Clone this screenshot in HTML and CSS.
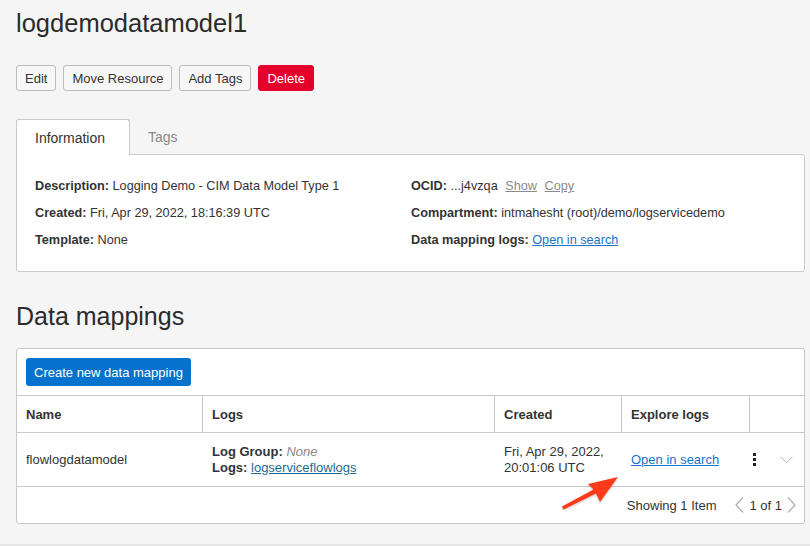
FILE: index.html
```html
<!DOCTYPE html>
<html lang="en">
<head>
<meta charset="utf-8">
<title>logdemodatamodel1</title>
<link rel="stylesheet" href="styles.css">
</head>
<body>
<main class="page">
  <h1 class="title">logdemodatamodel1</h1>
  <div class="actions">
    <button class="btn">Edit</button>
    <button class="btn">Move Resource</button>
    <button class="btn">Add Tags</button>
    <button class="btn btn-danger">Delete</button>
  </div>

  <div class="tabs">
    <div class="tab tab-active">Information</div>
    <div class="tab">Tags</div>
  </div>
  <section class="info-panel">
    <div class="info-col">
      <div class="info-row"><b>Description:</b> Logging Demo - CIM Data Model Type 1</div>
      <div class="info-row"><b>Created:</b> Fri, Apr 29, 2022, 18:16:39 UTC</div>
      <div class="info-row"><b>Template:</b> None</div>
    </div>
    <div class="info-col">
      <div class="info-row"><b>OCID:</b> ...j4vzqa <a class="muted-link">Show</a> <a class="muted-link">Copy</a></div>
      <div class="info-row"><b>Compartment:</b> intmahesht (root)/demo/logservicedemo</div>
      <div class="info-row"><b>Data mapping logs:</b> <a class="link">Open in search</a></div>
    </div>
  </section>

  <h2 class="section-title">Data mappings</h2>
  <section class="table-panel">
    <div class="toolbar">
      <button class="btn-primary">Create new data mapping</button>
    </div>
    <div class="grid head">
      <div class="cell">Name</div>
      <div class="cell bl">Logs</div>
      <div class="cell bl">Created</div>
      <div class="cell bl">Explore logs</div>
      <div class="cell bl"></div>
    </div>
    <div class="grid row">
      <div class="cell">flowlogdatamodel</div>
      <div class="cell stack">
        <div><b>Log Group:</b> <i class="none">None</i></div>
        <div><b>Logs:</b> <a class="link-dark">logserviceflowlogs</a></div>
      </div>
      <div class="cell stack">
        <div>Fri, Apr 29, 2022,</div>
        <div>20:01:06 UTC</div>
      </div>
      <div class="cell"><a class="link">Open in search</a></div>
      <div class="cell icons">
        <span class="kebab"><i></i><i></i><i></i></span>
        <svg class="chev" width="13" height="8" viewBox="0 0 13 8"><path d="M0.5 0.8 L6.5 6.8 L12.5 0.8" fill="none" stroke="#b4b4b4" stroke-width="1"/></svg>
      </div>
    </div>
    <div class="footer">
      <span class="showing">Showing 1 Item</span>
      <div class="pager">
        <svg width="9" height="16" viewBox="0 0 9 16"><path d="M8 0.5 L1 8 L8 15.5" fill="none" stroke="#b0b0b0" stroke-width="1.3"/></svg>
        <span>1 of 1</span>
        <svg width="9" height="16" viewBox="0 0 9 16"><path d="M1 0.5 L8 8 L1 15.5" fill="none" stroke="#b0b0b0" stroke-width="1.3"/></svg>
      </div>
    </div>
  </section>
</main>
<svg class="callout" width="70" height="45" viewBox="0 0 70 45">
  <defs>
    <filter id="sh" x="-20%" y="-20%" width="140%" height="140%">
      <feDropShadow dx="0" dy="1" stdDeviation="0.8" flood-color="#000" flood-opacity="0.25"/>
    </filter>
  </defs>
  <path filter="url(#sh)" fill="#fb3a1c" d="M63 7 L33 14 L38.5 19.5 L7 36.5 L8.5 39.5 L41 23.5 L45 32 Z"/>
</svg>
</body>
</html>
```

FILE: styles.css
```css
* { box-sizing: border-box; }
html, body { margin: 0; padding: 0; }
body {
  background: #f5f5f5;
  font-family: "Liberation Sans", Arial, sans-serif;
  color: #333;
  font-size: 13px;
  width: 810px;
  height: 546px;
  overflow: hidden;
  position: relative;
  border-bottom: 2px solid #e6e6e6;
}
.page {
  padding: 0 5px 0 16px;
}
.title {
  margin: 8px 0 0;
  font-size: 25.5px;
  line-height: 30px;
  font-weight: 400;
  color: #2b2b2b;
}
.actions {
  display: flex;
  gap: 7px;
  margin-top: 27px;
}
.btn {
  height: 26px;
  padding: 0 8px;
  border: 1px solid #b9bcc0;
  border-radius: 3px;
  background: #f7f7f7;
  color: #333;
  font: 13px "Liberation Sans", Arial, sans-serif;
}
.btn-danger {
  background: #e4002b;
  border-color: #e4002b;
  color: #fff;
  padding: 0 8px;
}
.tabs {
  display: flex;
  margin-top: 28px;
  position: relative;
  z-index: 1;
}
.tab {
  height: 36px;
  line-height: 36px;
  font-size: 14px;
  padding: 0 18px;
  color: #888;
}
.tab-active {
  color: #333;
  background: #fff;
  border: 1px solid #c6c9cd;
  border-bottom: none;
  border-radius: 3px 3px 0 0;
  width: 114px;
  height: 36px;
  line-height: 36px;
}
.info-panel {
  margin-top: -1px;
  background: #fff;
  border: 1px solid #c6c9cd;
  border-radius: 0 3px 3px 3px;
  padding: 18px 18px 17px;
  display: grid;
  grid-template-columns: 376px 1fr;
}
.info-row {
  height: 27px;
  line-height: 27px;
  white-space: nowrap;
  font-size: 12.7px;
}
.info-row b { font-weight: 700; color: #333; }
.muted-link {
  color: #8a8a8a;
  text-decoration: underline;
  margin-left: 4px;
}
.link {
  color: #1a73c9;
  text-decoration: underline;
}
.link-dark {
  color: #1f6b93;
  text-decoration: underline;
}
.section-title {
  margin: 29px 0 0;
  font-size: 25px;
  line-height: 30px;
  font-weight: 400;
  color: #2b2b2b;
}
.table-panel {
  margin-top: 17px;
  background: #fff;
  border: 1px solid #c6c9cd;
  border-radius: 3px;
}
.toolbar {
  padding: 9px;
}
.btn-primary {
  display: block;
  height: 28px;
  padding: 0 8px;
  border: none;
  border-radius: 3px;
  background: #0572ce;
  color: #fff;
  font: 13px "Liberation Sans", Arial, sans-serif;
}
.grid {
  display: grid;
  grid-template-columns: 185px 292px 127px 128px 1fr;
  border-top: 1px solid #c6c9cd;
}
.head { height: 37px; }
.head .cell { font-weight: 700; }
.row { height: 54px; }
.cell {
  display: flex;
  align-items: center;
  padding: 0 9px;
  white-space: nowrap;
}
.bl { border-left: 1px solid #c6c9cd; }
.head .bl { padding-left: 9px; }
.row .cell:nth-child(n+2) { padding-left: 10px; }
.stack {
  flex-direction: column;
  align-items: flex-start;
  justify-content: center;
  line-height: 16px;
}
.none { color: #888; }
.icons {
  justify-content: flex-start;
  gap: 0;
}
.kebab {
  display: flex;
  flex-direction: column;
  gap: 2px;
  margin-left: -6px;
}
.kebab i {
  display: block;
  width: 3px;
  height: 3px;
  background: #222;
}
.chev { margin-left: 24px; margin-top: 1px; }
.footer {
  border-top: 1px solid #c6c9cd;
  height: 37px;
  display: flex;
  align-items: center;
  justify-content: flex-end;
  padding: 0 8px 0 0;
}
.showing { margin-right: 19px; }
.pager {
  display: flex;
  align-items: center;
  gap: 5px;
}
.callout {
  position: absolute;
  left: 555px;
  top: 470px;
}
```
